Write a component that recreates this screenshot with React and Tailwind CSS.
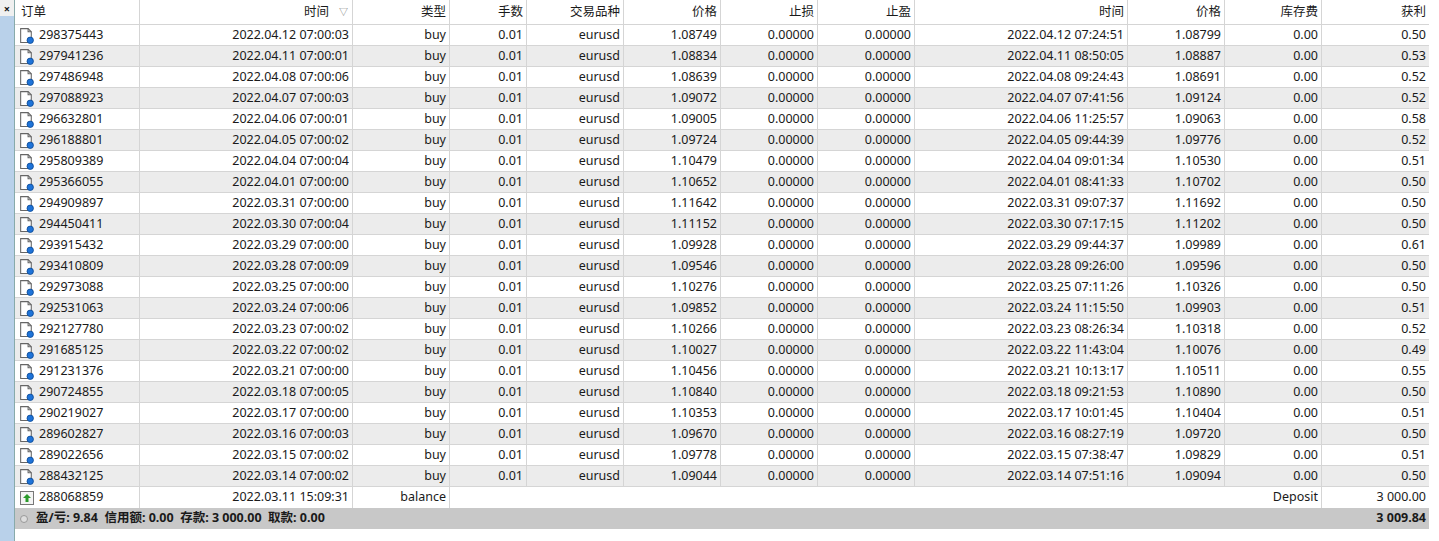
const rows = [
["298375443","2022.04.12 07:00:03","1.08749","2022.04.12 07:24:51","1.08799","0.50"],
["297941236","2022.04.11 07:00:01","1.08834","2022.04.11 08:50:05","1.08887","0.53"],
["297486948","2022.04.08 07:00:06","1.08639","2022.04.08 09:24:43","1.08691","0.52"],
["297088923","2022.04.07 07:00:03","1.09072","2022.04.07 07:41:56","1.09124","0.52"],
["296632801","2022.04.06 07:00:01","1.09005","2022.04.06 11:25:57","1.09063","0.58"],
["296188801","2022.04.05 07:00:02","1.09724","2022.04.05 09:44:39","1.09776","0.52"],
["295809389","2022.04.04 07:00:04","1.10479","2022.04.04 09:01:34","1.10530","0.51"],
["295366055","2022.04.01 07:00:00","1.10652","2022.04.01 08:41:33","1.10702","0.50"],
["294909897","2022.03.31 07:00:00","1.11642","2022.03.31 09:07:37","1.11692","0.50"],
["294450411","2022.03.30 07:00:04","1.11152","2022.03.30 07:17:15","1.11202","0.50"],
["293915432","2022.03.29 07:00:00","1.09928","2022.03.29 09:44:37","1.09989","0.61"],
["293410809","2022.03.28 07:00:09","1.09546","2022.03.28 09:26:00","1.09596","0.50"],
["292973088","2022.03.25 07:00:00","1.10276","2022.03.25 07:11:26","1.10326","0.50"],
["292531063","2022.03.24 07:00:06","1.09852","2022.03.24 11:15:50","1.09903","0.51"],
["292127780","2022.03.23 07:00:02","1.10266","2022.03.23 08:26:34","1.10318","0.52"],
["291685125","2022.03.22 07:00:02","1.10027","2022.03.22 11:43:04","1.10076","0.49"],
["291231376","2022.03.21 07:00:00","1.10456","2022.03.21 10:13:17","1.10511","0.55"],
["290724855","2022.03.18 07:00:05","1.10840","2022.03.18 09:21:53","1.10890","0.50"],
["290219027","2022.03.17 07:00:00","1.10353","2022.03.17 10:01:45","1.10404","0.51"],
["289602827","2022.03.16 07:00:03","1.09670","2022.03.16 08:27:19","1.09720","0.50"],
["289022656","2022.03.15 07:00:02","1.09778","2022.03.15 07:38:47","1.09829","0.51"],
["288432125","2022.03.14 07:00:02","1.09044","2022.03.14 07:51:16","1.09094","0.50"],
];
const W=[125,213,97,77,97,97,97,97,213,97,97,107];
const cols = W.map(w=>w+"px").join(" ");
const F={fontFamily:'"Noto Sans","Noto Sans CJK SC",sans-serif'};

function DocIcon(){return(<svg width="17" height="17" viewBox="0 0 16 16" className="shrink-0"><path d="M2.5 1.5h7l3 3V14.5H2.5z" fill="#fff" stroke="#666"/><path d="M9.5 1.5v3h3" fill="none" stroke="#666"/><circle cx="11.5" cy="12.5" r="3" fill="#1e73d8" stroke="#0d4a96" strokeWidth="0.8"/></svg>);}
function BalIcon(){return(<svg width="14" height="14" viewBox="0 0 14 14" className="shrink-0"><rect x="0.5" y="0.5" width="13" height="13" fill="#f4f4f4" stroke="#777"/><path d="M7 3l4 4H8.5v4h-3V7H3z" fill="#2a9a2a"/></svg>);}

const Cell=({c,left,children,last})=>(<div className={`h-full flex items-center px-[3px] ${left?"justify-start":"justify-end"} ${last?"":"border-r border-[#d5d5d5]"} ${c||""}`}>{children}</div>);

export default function App(){
  const heads=["订单","时间","类型","手数","交易品种","价格","止损","止盈","时间","价格","库存费","获利"];
  return(<div className="w-[1439px] h-[541px] flex bg-white text-[12.5px] text-[#1a1a1a] overflow-hidden" style={F}>
    <div className="w-[15px] h-full bg-[#b9d1ea] border-r border-[#8aa] flex flex-col items-center">
      <div className="w-full h-[16px] bg-[#f0f0f0] flex items-center justify-center text-[11px] font-bold leading-none">×</div>
    </div>
    <div className="flex flex-col">
      <div className="grid h-[25px] border-b border-[#d5d5d5]" style={{gridTemplateColumns:cols}}>
        {heads.map((h,i)=>(<Cell key={i} left={i===0} last={i===11} c={i===0?"pl-[6px]":""}>{i===1?<span className="flex items-center">{h}<span className="ml-[10px] mr-[1px] text-[9px] text-[#777]">▽</span></span>:h}</Cell>))}
      </div>
      {rows.map((r,i)=>(<div key={i} className={`grid h-[21px] border-b border-[#d5d5d5] ${i%2?"bg-[#ececec]":"bg-white"}`} style={{gridTemplateColumns:cols}}>
        <Cell left><span className="flex items-center gap-[4px]"><DocIcon/>{r[0]}</span></Cell>
        <Cell>{r[1]}</Cell><Cell>buy</Cell><Cell>0.01</Cell><Cell c="justify-center">eurusd</Cell>
        <Cell>{r[2]}</Cell><Cell>0.00000</Cell><Cell>0.00000</Cell><Cell>{r[3]}</Cell><Cell>{r[4]}</Cell><Cell>0.00</Cell><Cell last>{r[5]}</Cell>
      </div>))}
      <div className="flex h-[21px] bg-white">
        <div className="grid h-full" style={{gridTemplateColumns:"125px 213px 97px"}}>
          <Cell left><span className="flex items-center gap-[5px] pl-[2px]"><BalIcon/>288068859</span></Cell>
          <Cell>2022.03.11 15:09:31</Cell><Cell>balance</Cell>
        </div>
        <div className="w-[872px] h-full flex items-center justify-end px-[3px] border-r border-[#d5d5d5]">Deposit</div>
        <div className="w-[107px] h-full flex items-center justify-end px-[3px]">3 000.00</div>
      </div>
      <div className="h-[21px] bg-[#c8c8c8] flex items-center justify-between font-bold px-[3px]">
        <span className="flex items-center gap-[8px]"><span className="w-[8px] h-[8px] rounded-full border border-[#999] bg-[#ddd] ml-[2px]"></span>盈/亏: 9.84&nbsp; 信用额: 0.00&nbsp; 存款: 3 000.00&nbsp; 取款: 0.00</span>
        <span>3 009.84</span>
      </div>
    </div>
  </div>);
}
